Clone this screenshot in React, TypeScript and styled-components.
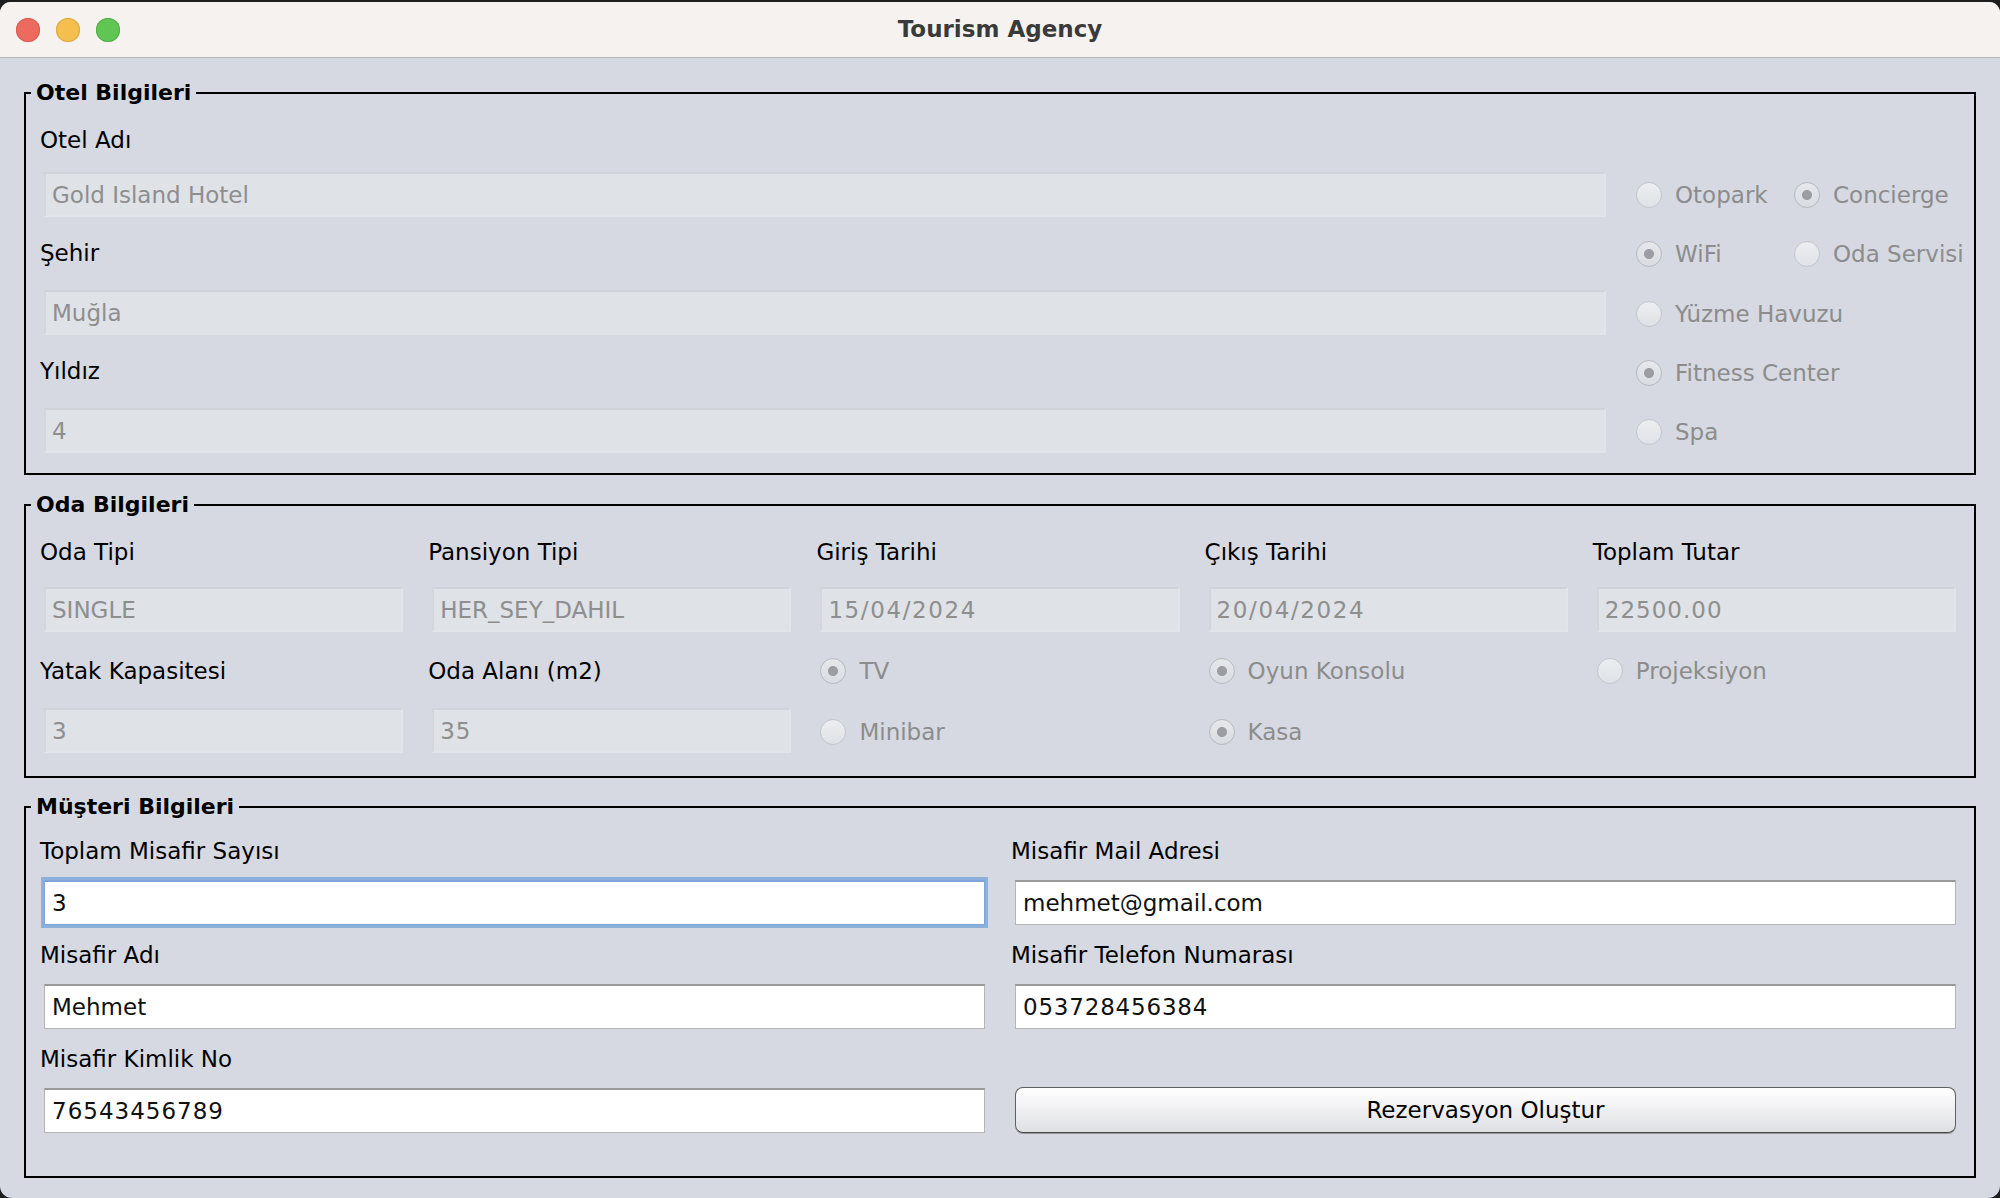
import React from "react";
import styled, { createGlobalStyle, css } from "styled-components";

const Global = createGlobalStyle`
  html, body { margin: 0; padding: 0; background: #1e1e1e; }
  body { font-family: "DejaVu Sans", "Noto Sans", sans-serif; }
  * { box-sizing: border-box; }
`;

const Window = styled.div`
  margin-top: 2px;
  width: 2000px;
  height: 1196px;
  border-radius: 11px 11px 12px 12px;
  overflow: hidden;
  background: #d6d9e1;
  display: flex;
  flex-direction: column;
`;

const TitleBar = styled.header`
  flex: none;
  height: 56px;
  background: #f6f2ef;
  border-bottom: 1px solid #b6b6ba;
  display: grid;
  grid-template-columns: 1fr auto 1fr;
  align-items: center;
`;

const Lights = styled.div`
  display: flex;
  gap: 16px;
  padding-left: 16px;
`;

const Light = styled.span<{ $c: string; $b: string }>`
  width: 24px;
  height: 24px;
  border-radius: 50%;
  background: ${(p) => p.$c};
  box-shadow: inset 0 0 0 1px ${(p) => p.$b};
`;

const Title = styled.h1`
  margin: 0;
  font: bold 23px/1 "DejaVu Sans", sans-serif;
  color: #3a3a3a;
`;

const Content = styled.main`
  padding: 22px 24px 0;
  display: flex;
  flex-direction: column;
`;

const Frame = styled.fieldset<{ $mt?: number }>`
  margin: ${(p) => p.$mt ?? 0}px 0 0;
  padding: 0;
  min-width: 0;
  border: 2px solid #000;
`;

const Legend = styled.legend`
  margin-left: 5px;
  padding: 0 5px;
  font: bold 22px/26px "DejaVu Sans", sans-serif;
  color: #000;
`;

const HotelBody = styled.div`
  padding: 20px 14px 20px;
  display: grid;
  grid-template-columns: 1fr 324px;
  column-gap: 26px;
  align-items: start;
`;

const RoomBody = styled.div`
  padding: 20px 14px 23px;
  display: grid;
  grid-template-columns: repeat(5, 1fr);
  column-gap: 21px;
  row-gap: 25px;
`;

const GuestBody = styled.div`
  padding: 17px 14px 43px;
  display: grid;
  grid-template-columns: 1fr 1fr;
  column-gap: 22px;
  row-gap: 16px;
`;

const Stack = styled.div<{ $gap: number }>`
  display: flex;
  flex-direction: column;
  gap: ${(p) => p.$gap}px;
  min-width: 0;
`;

const Label = styled.label`
  display: block;
  font: 23px/28px "DejaVu Sans", sans-serif;
  color: #000;
  white-space: nowrap;
`;

const Field = styled.input<{ $off?: boolean; $focus?: boolean; $ls?: number }>`
  display: block;
  width: calc(100% - 8px);
  height: 45px;
  margin: 0 4px;
  padding: 0 7px;
  font: 23px "DejaVu Sans", sans-serif;
  letter-spacing: ${(p) => p.$ls ?? 0}px;
  outline: none;
  border-radius: 0;
  ${(p) =>
    p.$off
      ? css`
          background: #dfe2e7;
          color: #8e8e8e;
          border: 2px solid #e1e4e8;
          border-top-color: #d0d3d9;
          border-left-color: #d3d6dc;
          padding-left: 6px;
        `
      : css`
          background: #ffffff;
          color: #111111;
          border: 1px solid #b4b4b4;
          border-top: 2px solid #999999;
        `}
  ${(p) =>
    p.$focus &&
    css`
      border-color: #7fa5d8;
      box-shadow: 0 0 0 3px #8cafdc;
    `}
`;

const RadioGrid = styled.div`
  padding-top: 55px;
  display: grid;
  grid-template-columns: 158px 166px;
  grid-template-rows: repeat(4, 59.3px) auto;
  align-items: start;
`;

const Radio = styled.div<{ $h?: number; $pl?: number }>`
  height: ${(p) => (p.$h ? `${p.$h}px` : "28px")};
  padding-left: ${(p) => p.$pl ?? 0}px;
  display: flex;
  align-items: center;
  gap: 13px;
  white-space: nowrap;
  font: 23px/28px "DejaVu Sans", sans-serif;
  color: #8c8c8c;
`;

const Dot = styled.span<{ $on?: boolean }>`
  flex: none;
  width: 26px;
  height: 26px;
  border-radius: 50%;
  border: 1.5px solid ${(p) => (p.$on ? "#b7b9be" : "#c3c6cb")};
  background: ${(p) =>
    p.$on
      ? "radial-gradient(circle, #9b9da3 0 4.6px, transparent 5.4px), linear-gradient(#e6e8eb, #d9dce1)"
      : "linear-gradient(#eceef1, #dfe2e6)"};
`;

const ButtonCell = styled.div`
  align-self: end;
`;

const Button = styled.button`
  display: block;
  width: calc(100% - 8px);
  height: 46px;
  margin: 0 4px 0;
  border: 1.5px solid #606060;
  border-bottom-color: #474747;
  border-radius: 8px;
  background: linear-gradient(#ffffff, #f2f2f4 40%, #dfe0e4);
  box-shadow: 0 1px 0 #9a9a9a;
  font: 23px "DejaVu Sans", sans-serif;
  color: #000;
`;

type FProps = { label: string; value: string; off?: boolean; focus?: boolean; ls?: number; gap: number };

const FieldGroup = ({ label, value, off, focus, ls, gap }: FProps) => (
  <Stack $gap={gap}>
    <Label>{label}</Label>
    <Field value={value} readOnly tabIndex={-1} $off={off} $focus={focus} $ls={ls} />
  </Stack>
);

type RProps = { text: string; on?: boolean; h?: number; pl?: number };
const RadioItem = ({ text, on, h, pl }: RProps) => (
  <Radio $h={h} $pl={pl}>
    <Dot $on={on} />
    <span>{text}</span>
  </Radio>
);

export default function App() {
  return (
    <>
      <Global />
      <Window>
        <TitleBar>
          <Lights>
            <Light $c="#ed6a5e" $b="#d85c51" />
            <Light $c="#f5bf4f" $b="#dba740" />
            <Light $c="#61c554" $b="#52ad46" />
          </Lights>
          <Title>Tourism Agency</Title>
          <div />
        </TitleBar>
        <Content>
          <Frame>
            <Legend>Otel Bilgileri</Legend>
            <HotelBody>
              <Stack $gap={22}>
                <FieldGroup gap={18} label="Otel Adı" value="Gold Island Hotel" off />
                <FieldGroup gap={23} label="Şehir" value="Muğla" off />
                <FieldGroup gap={23} label="Yıldız" value="4" off />
              </Stack>
              <RadioGrid>
                <RadioItem text="Otopark" />
                <RadioItem text="Concierge" on />
                <RadioItem text="WiFi" on />
                <RadioItem text="Oda Servisi" />
                <RadioItem text="Yüzme Havuzu" />
                <div />
                <RadioItem text="Fitness Center" on />
                <div />
                <RadioItem text="Spa" />
              </RadioGrid>
            </HotelBody>
          </Frame>

          <Frame $mt={17}>
            <Legend>Oda Bilgileri</Legend>
            <RoomBody>
              <FieldGroup gap={21} label="Oda Tipi" value="SINGLE" off />
              <FieldGroup gap={21} label="Pansiyon Tipi" value="HER_SEY_DAHIL" off />
              <FieldGroup gap={21} label="Giriş Tarihi" value="15/04/2024" off ls={1.6} />
              <FieldGroup gap={21} label="Çıkış Tarihi" value="20/04/2024" off ls={1.6} />
              <FieldGroup gap={21} label="Toplam Tutar" value="22500.00" off ls={1} />
              <FieldGroup gap={23} label="Yatak Kapasitesi" value="3" off />
              <FieldGroup gap={23} label="Oda Alanı (m2)" value="35" off ls={1} />
              <Stack $gap={25}>
                <RadioItem text="TV" on h={28} pl={4} />
                <RadioItem text="Minibar" h={43} pl={4} />
              </Stack>
              <Stack $gap={25}>
                <RadioItem text="Oyun Konsolu" on h={28} pl={4} />
                <RadioItem text="Kasa" on h={43} pl={4} />
              </Stack>
              <Stack $gap={25}>
                <RadioItem text="Projeksiyon" h={28} pl={4} />
              </Stack>
            </RoomBody>
          </Frame>

          <Frame $mt={16}>
            <Legend>Müşteri Bilgileri</Legend>
            <GuestBody>
              <FieldGroup gap={15} label="Toplam Misafir Sayısı" value="3" focus />
              <FieldGroup gap={15} label="Misafir Mail Adresi" value="mehmet@gmail.com" />
              <FieldGroup gap={15} label="Misafir Adı" value="Mehmet" />
              <FieldGroup gap={15} label="Misafir Telefon Numarası" value="053728456384" ls={0.8} />
              <FieldGroup gap={15} label="Misafir Kimlik No" value="76543456789" ls={1} />
              <ButtonCell>
                <Button type="button">Rezervasyon Oluştur</Button>
              </ButtonCell>
            </GuestBody>
          </Frame>
        </Content>
      </Window>
    </>
  );
}
